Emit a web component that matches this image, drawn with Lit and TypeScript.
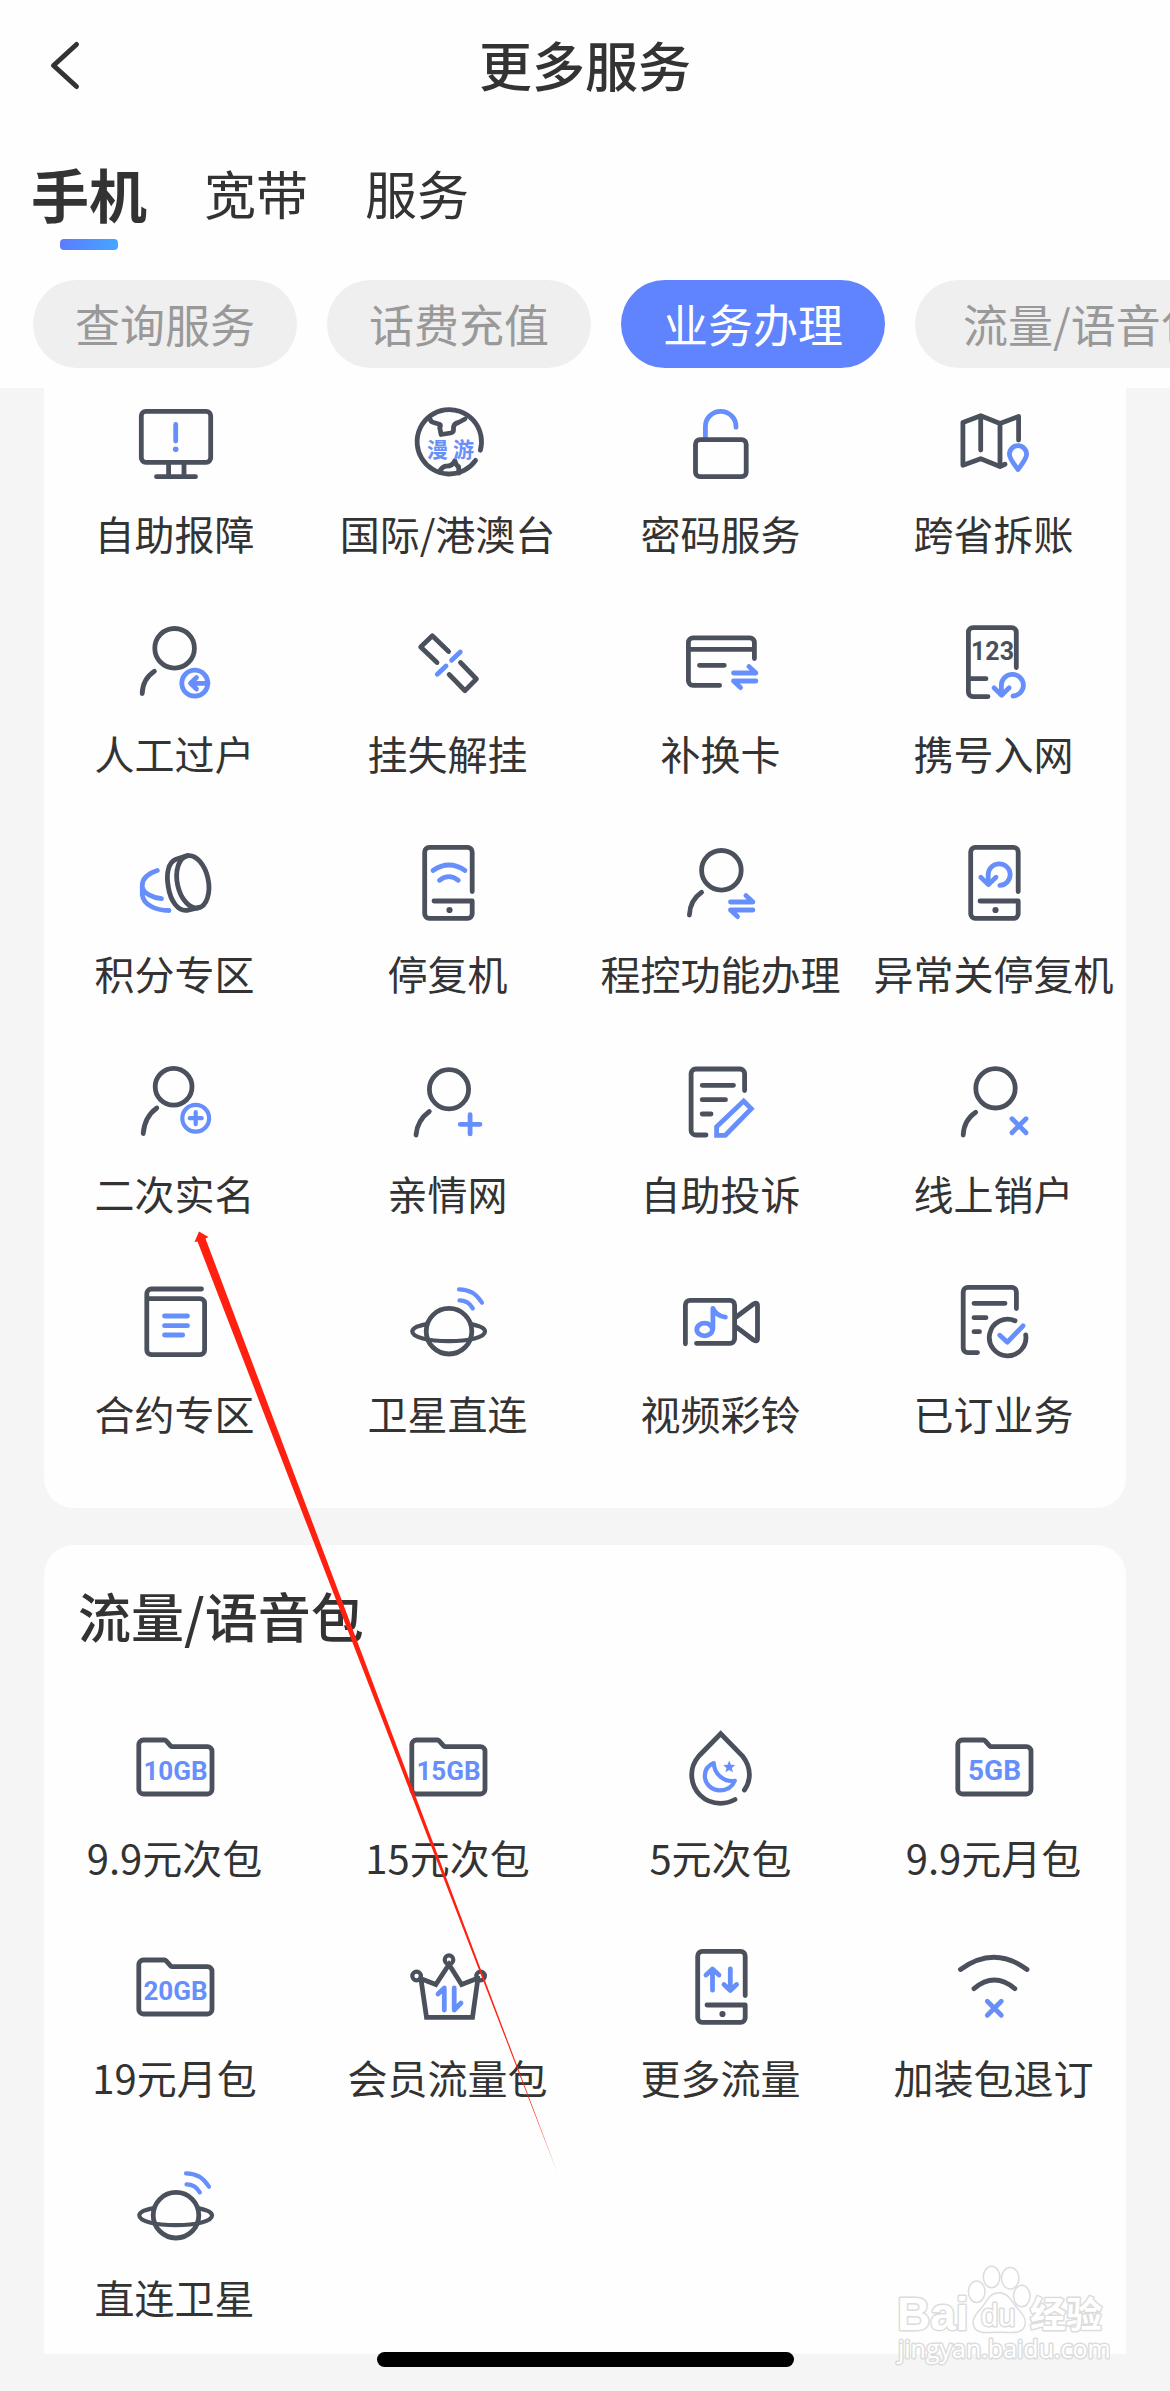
import { LitElement, html, css, svg, nothing, type SVGTemplateResult } from "lit";
import { customElement, property, state } from "lit/decorators.js";
import { classMap } from "lit/directives/class-map.js";

interface Service {
  label: string;
  icon: string;
}

/* ---- icon parts, all on a 90 x 90 grid; class k is ink, class b is blue ---- */

const person = (cx: number, cy: number, r: number, shoulder: string) => svg`
  <circle class="k" cx=${cx} cy=${cy} r=${r} />
  <path class="k" d=${shoulder} />`;

const phone = svg`
  <path class="k" d="M69.2 52.5V13a4.6 4.6 0 0 0-4.6-4.6H26.3a4.6 4.6 0 0 0-4.6 4.6v61.7a4.6 4.6 0 0 0 4.6 4.6h38.3a4.6 4.6 0 0 0 4.6-4.6V62H31" />
  <circle class="kf" cx="46.5" cy="71" r="3.1" />`;

const folder = (text: string, size: number) => svg`
  <path class="k" d="M13.4 17H34.4q1 0 1.8.9l4.4 5q.7.8 1.8.8H77.4a4.6 4.6 0 0 1 4.6 4.6V66.4a4.6 4.6 0 0 1-4.6 4.6H13.4a4.6 4.6 0 0 1-4.6-4.6V21.6a4.6 4.6 0 0 1 4.6-4.6z" />
  <text class="gb" x="45.5" y="57" font-size=${size}>${text}</text>`;

const undo = svg`
  <path class="b" d="M52.4 75.5V67A11 10.8 0 1 1 64 77" />
  <path class="b" d="M45 68.8l7.6 7.4 7.6-7.4" />`;

const swap = svg`
  <path class="b" d="M0 0H22.4L15.4-6.4M22.4 8H0L7 14.6" />`;

const cross = svg`<path class="b" d="M-7-7L7 7M7-7L-7 7" />`;

const planet = svg`
  <circle class="k" cx="46" cy="52.2" r="22.8" />
  <path class="k thin" d="M22.5 45.4C14 47 9.3 49.6 9.3 52.6c0 5.6 16 9.6 36.5 9.6s36.2-4 36.2-9.6c0-3-4.7-5.6-13-7.2" />
  <path class="b thin" d="M56 10.4c10 0 18 5 23 13.4M56.5 21.4c6 0 10.5 3 13.3 8" />`;

const icons: Record<string, SVGTemplateResult> = {
  monitor: svg`
    <rect class="k" x="11.3" y="12.3" width="69.4" height="51" rx="4.5" />
    <path class="k" d="M38.6 64v13M54 64v13M26.5 77.7h39" />
    <path class="b" d="M45.7 25.5v16.5" /><circle class="bf" cx="45.7" cy="50.3" r="2.8" />`,
  globe: svg`
    <path class="k" d="M77.4 51.2A32.2 32.2 0 1 0 72.6 61.4" />
    <path class="k" d="M27 19.5q.5 3.500 3.500 4l6 1.700q1.600 1.200.2 3.300l1.400 7 9.500-1.500q3-.7 2.900-3.300V28q1-4 5-4.500l6.500-3.500M36.300 73q2.500-5 6.500-5.800 6.500.3 9-5.500 1.500 5 3.700 5.800l.5 6.500" />
    <text class="cn" x="24" y="58">漫</text><text class="cn" x="50" y="58">游</text>`,
  lock: svg`
    <path class="b" d="M29.4 40V27.6a15.3 15.3 0 0 1 30.6 0v.7" />
    <rect class="k" x="19.5" y="40.7" width="50.7" height="37" rx="4.5" />`,
  map: svg`
    <path class="k" d="M69.6 41V17.5L51 24.5 31.7 16.7 13.9 23.5V66.3L31.7 59.7 51 67.5 56 65.2M31.7 17V51M51 25V67" />
    <path class="b" d="M69 70.5C64.8 65 60.4 59.5 60.4 55.3a8.6 8.6 0 0 1 17.2 0C77.6 59.5 73.2 65 69 70.5z" />`,
  transfer: svg`
    ${person(44.6, 29.3, 19.8, "M24.4 52.3C16.5 57.5 12.5 65.5 12.2 74.5")}
    <circle class="b" cx="64.8" cy="64.2" r="13" />
    <path class="b" d="M78 64.3H61M66.5 58.5l-6 5.8 6 5.8" />`,
  unlink: svg`
    <path class="k" d="M45.6 32.5L29.3 16.7 17.7 28 34 43.5M57.5 43.5L73.4 60 62 71.7 46.2 55.5" />
    <path class="b" d="M57.3 33l-8.7 8.3M43 47l-8.7 8.3" />`,
  card: svg`
    <path class="k" d="M43.6 66.4H17a4.6 4.6 0 0 1-4.6-4.6V23.4a4.6 4.6 0 0 1 4.6-4.6H73.8a4.6 4.6 0 0 1 4.6 4.6V39.5M12.4 30.3h66M23.5 46.3H48.3" />
    <g transform="translate(57.5 54)">${swap}</g>`,
  number: svg`
    <path class="k" d="M67.3 48.5V13.2a4.6 4.6 0 0 0-4.6-4.6H24a4.6 4.6 0 0 0-4.6 4.6V73a4.6 4.6 0 0 0 4.6 4.6H39M19.4 59.7H37" />
    <text class="num" x="43.5" y="41">123</text>${undo}`,
  coins: svg`
    <ellipse class="k" cx="62.8" cy="42.8" rx="15.5" ry="26.6" transform="rotate(-12 62.8 42.8)" />
    <path class="k" d="M57.5 16.5L46 20.3C38 23.5 36 35 38.3 48 40.5 62 48 72.5 57 71.3L69.5 68.3" />
    <path class="b" d="M27.3 31.5C18 34.5 12.3 40 12.3 46.5V56C13.5 65.5 25 71.3 39 71.5M12.5 48.5C14 54.5 22 58.5 31.5 59.7" />`,
  phonewifi: svg`${phone}
    <path class="b" d="M30 31.5Q46 20.5 62 31.5M36.5 41.3Q46 34 55.3 41.3" />`,
  program: svg`
    ${person(45.4, 31.3, 19.8, "M25.6 53.3C18 58.5 13.8 67 13.4 76")}
    <g transform="translate(54.5 63)">${swap}</g>`,
  phoneback: svg`${phone}<g transform="translate(-13.2 -30.6)">${undo}</g>`,
  realname: svg`
    ${person(43.6, 27.8, 18.4, "M26.8 49C18.5 55 14 64.5 13.2 74.5")}
    <circle class="b thin" cx="65.7" cy="59.2" r="13.4" />
    <path class="b thin" d="M59.7 59.2h12M65.7 53.2v12" />`,
  family: svg`
    ${person(46, 30.3, 19.6, "M26.3 52.5C18 58.5 13.8 66.5 13 76")}
    <path class="b" d="M57.2 65.3h19.8M67.1 55.7v19.2" />`,
  complain: svg`
    <path class="k" d="M68.6 31.5V14.6a4.6 4.6 0 0 0-4.6-4.6H19.7a4.6 4.6 0 0 0-4.6 4.6V71.4a4.6 4.6 0 0 0 4.6 4.6H30M26.2 26.3H57.5M26.2 40.7H49.5M26.2 55H35" />
    <path class="b miter" d="M67.6 42L75.3 49.8 49.3 76.3H40.6V67.8z" />`,
  close: svg`
    ${person(46.5, 29.3, 19.7, "M26.7 53.3C19 58.5 14.6 67 14.2 76")}
    <g transform="translate(70 66.7)">${cross}</g>`,
  contract: svg`
    <path class="k" d="M71.5 10H21.4a4.6 4.6 0 0 0-4.6 4.6V71a4.6 4.6 0 0 0 4.6 4.6H70a4.6 4.6 0 0 0 4.6-4.6V24.3A4.6 4.6 0 0 0 70 19.7H17" />
    <path class="b" d="M34.5 37H57.5M34.5 46.7H57.5M34.5 56H52.7" />`,
  planet,
  video: svg`
    <path class="k" d="M9.4 64.8V26a4.6 4.6 0 0 1 4.6-4.6H54a4.6 4.6 0 0 1 4.6 4.6V59.7a4.6 4.6 0 0 1-4.6 4.6H20.5M59.5 38.5L77.5 25q4-2.5 4 1.500V59.500q0 4-4 1.500L59.500 47.300" />
    <ellipse class="b" cx="28.6" cy="50.5" rx="7.8" ry="6.3" />
    <path class="b" d="M36.9 50V29.3q3.5 8 12.5 8.8" />`,
  ordered: svg`
    <path class="k" d="M67.4 29.5V12.9a4.6 4.6 0 0 0-4.6-4.6H18.8a4.6 4.6 0 0 0-4.6 4.6V69a4.6 4.6 0 0 0 4.6 4.6H28.5M25 24.3H56M25 38.7H37M25 52.7H30.5" />
    <path class="k" d="M66 41.8A18.3 18.3 0 1 0 76.7 55.8" />
    <path class="b" d="M50.8 56.2l7.6 7L74 46.8" />`,
  gb10: folder("10GB", 26),
  gb15: folder("15GB", 26),
  gb5: folder("5GB", 28),
  gb20: folder("20GB", 26),
  drop: svg`
    <path class="k miter" d="M68.4 67C72 62 73.4 57 73.4 51.5 73.4 43 70 37.5 66.5 33L44.7 10.8 22.9 33C19 37.5 15.7 43 15.7 51.5 15.7 68 28.5 80.3 44.5 80.3 50 80.3 54.5 79 59 76.5" />
    <path class="b thin" d="M37.8 40C31.5 42.5 28.8 47.5 28.8 53a15 14.6 0 0 0 15 14.3C51 67.3 56.5 63.5 58.8 57.8 48 59.5 38 51 37.8 40z" />
    <path class="bf" d="M53.2 37.5l1.7 4.2 4.3.3-3.3 2.900 1 4.400-3.700-2.400-3.800 2.400 1.100-4.400-3.400-2.900 4.400-.3z" />`,
  crown: svg`
    <circle class="k thin" cx="46" cy="16.7" r="4.3" /><circle class="k thin" cx="13.6" cy="33" r="4.3" /><circle class="k thin" cx="77.6" cy="33" r="4.3" />
    <path class="k miter" d="M17.8 35L23.5 74.3H69.5L75 35M17.5 35.5L32.8 41.5 46 21.5 58.6 41.5 74 35.5" />
    <path class="b" d="M41.3 67V45L35 51M51.2 45V67L58 60" />`,
  traffic: svg`${phone}
    <path class="b" d="M36.5 47.2V27M30 32l6.5-6 6.5 6M54.3 26V46.5M48 41.5l6.3 6 6.3-6" />`,
  wifioff: svg`
    <path class="k" d="M11.5 26.5Q45 2 78 26.5M25 45.7Q45.3 28.5 65.8 45.7" />
    <g transform="translate(45.3 65.3)">${cross}</g>`,
};

const business: Service[] = [
  { label: "自助报障", icon: "monitor" },
  { label: "国际/港澳台", icon: "globe" },
  { label: "密码服务", icon: "lock" },
  { label: "跨省拆账", icon: "map" },
  { label: "人工过户", icon: "transfer" },
  { label: "挂失解挂", icon: "unlink" },
  { label: "补换卡", icon: "card" },
  { label: "携号入网", icon: "number" },
  { label: "积分专区", icon: "coins" },
  { label: "停复机", icon: "phonewifi" },
  { label: "程控功能办理", icon: "program" },
  { label: "异常关停复机", icon: "phoneback" },
  { label: "二次实名", icon: "realname" },
  { label: "亲情网", icon: "family" },
  { label: "自助投诉", icon: "complain" },
  { label: "线上销户", icon: "close" },
  { label: "合约专区", icon: "contract" },
  { label: "卫星直连", icon: "planet" },
  { label: "视频彩铃", icon: "video" },
  { label: "已订业务", icon: "ordered" },
];

const packs: Service[] = [
  { label: "9.9元次包", icon: "gb10" },
  { label: "15元次包", icon: "gb15" },
  { label: "5元次包", icon: "drop" },
  { label: "9.9元月包", icon: "gb5" },
  { label: "19元月包", icon: "gb20" },
  { label: "会员流量包", icon: "crown" },
  { label: "更多流量", icon: "traffic" },
  { label: "加装包退订", icon: "wifioff" },
  { label: "直连卫星", icon: "planet" },
];

@customElement("service-grid")
class ServiceGrid extends LitElement {
  @property() heading = "";
  @property({ attribute: false }) items: Service[] = [];

  static styles = css`
    :host { display: block; background: #fefefe; }
    .heading {
      margin: 0; padding: 34px 34px 72px;
      font-size: 53px; line-height: 72px; font-weight: 500; color: #333;
    }
    .grid {
      display: grid; grid-template-columns: repeat(4, minmax(0, 1fr));
      row-gap: 58px; margin: 0 -4px 0 -6px; padding: 0; list-style: none;
    }
    .cell {
      display: flex; flex-direction: column; align-items: center; gap: 16px;
      color: #333; text-decoration: none; font-size: 40px; line-height: 56px; white-space: nowrap;
    }
    .icon { display: block; width: 90px; height: 90px; }
    .k, .b { fill: none; stroke-width: 4.8; stroke-linecap: round; stroke-linejoin: round; }
    .k { stroke: #4a505c; }
    .b { stroke: #678ffb; }
    .thin { stroke-width: 4.2; }
    .miter { stroke-linejoin: miter; }
    .kf { fill: #4a505c; }
    .bf { fill: #678ffb; }
    .cn { fill: #678ffb; font-size: 21px; font-weight: 700; }
    .gb, .num { text-anchor: middle; font-family: "Roboto", "Liberation Sans", sans-serif; font-weight: 700; }
    .gb { fill: #678ffb; }
    .num { fill: #4a505c; font-size: 25px; }
  `;

  render() {
    return html`
      ${this.heading ? html`<h2 class="heading">${this.heading}</h2>` : nothing}
      <ul class="grid">
        ${this.items.map((s) => html`
          <li>
            <a class="cell" href="#">
              <svg class="icon" viewBox="0 0 90 90" aria-hidden="true">${icons[s.icon]}</svg>
              <span>${s.label}</span>
            </a>
          </li>`)}
      </ul>`;
  }
}

@customElement("app-root")
class AppRoot extends LitElement {
  @state() private tab = "手机";
  @state() private chip = "业务办理";

  static styles = css`
    :host {
      display: block; position: relative; overflow: hidden; background: #f5f5f5; color: #333;
      font-family: "Noto Sans CJK SC", "Noto Sans", sans-serif;
    }
    button { font: inherit; color: inherit; border: 0; padding: 0; background: none; cursor: pointer; }
    .top { background: #fefefe; padding-bottom: 20px; }
    .bar { display: grid; grid-template-columns: 1fr auto 1fr; align-items: center; height: 128px; }
    .back { justify-self: start; margin-left: 44px; width: 44px; height: 60px; }
    .back svg { display: block; width: 44px; height: 60px; }
    .title { margin: 0; font-size: 53px; line-height: 72px; font-weight: 500; }
    .tabs { display: flex; gap: 57px; padding: 23px 31px 0; }
    .tab { display: flex; flex-direction: column; align-items: center; font-size: 52px; line-height: 84px; }
    .tab.on { font-size: 58px; font-weight: 700; }
    .tab.on::after {
      content: ""; width: 58px; height: 11px; margin-top: 4px; border-radius: 4px;
      background: linear-gradient(90deg, #5b7cff, #45a6ff);
    }
    .chips { display: flex; gap: 30px; padding: 30px 0 0 33px; overflow: hidden; }
    .chip {
      flex: none; height: 88px; padding: 0 42px; border-radius: 44px;
      background: #efefef; color: #999; font-size: 45px; line-height: 86px; white-space: nowrap;
    }
    .chip.long { padding: 0 48px; }
    .chip.on { background: #6083fe; color: #fff; }
    .main { display: flex; flex-direction: column; gap: 37px; padding: 0 44px; }
    .first { padding: 11px 0 67px; border-radius: 0 0 30px 30px; }
    .second { padding-bottom: 29px; border-radius: 30px 30px 0 0; }
    .safe { height: 37px; }
    .home {
      position: absolute; left: 50%; bottom: 24px; width: 417px; height: 15px;
      margin-left: -208px; border-radius: 8px; background: #000;
    }
    .pointer { position: absolute; left: 190px; top: 1230px; width: 370px; height: 945px; pointer-events: none; }
    .mark { position: absolute; right: 60px; bottom: 21px; width: 220px; height: 110px; pointer-events: none; }
    .mark text, .mark .w { fill: #fff; stroke: #dcdcdc; stroke-width: 3; paint-order: stroke; stroke-linejoin: round; }
    .mark .bai { font: 700 46px "Liberation Sans", sans-serif; }
    .mark .du { font: 400 31px "Liberation Sans", sans-serif; }
    .mark .jy { font: 700 36px "Noto Sans CJK SC", sans-serif; }
    .mark .url { font: 400 25px "Open Sans", sans-serif; }
  `;

  render() {
    return html`
      <header class="top">
        <div class="bar">
          <button class="back" aria-label="返回">
            <svg viewBox="0 0 44 60" aria-hidden="true"><path d="M32.5 10.500L9.500 31.500 32.500 52.500" fill="none" stroke="#333" stroke-width="5" stroke-linecap="round" stroke-linejoin="round" /></svg>
          </button>
          <h1 class="title">更多服务</h1>
        </div>
        <nav class="tabs">
          ${["手机", "宽带", "服务"].map((t) => html`
            <button class=${classMap({ tab: true, on: t === this.tab })} @click=${() => (this.tab = t)}>${t}</button>`)}
        </nav>
        <div class="chips">
          ${["查询服务", "话费充值", "业务办理", "流量/语音包"].map((c) => html`
            <button class=${classMap({ chip: true, long: c.length > 4, on: c === this.chip })} @click=${() => (this.chip = c)}>${c}</button>`)}
        </div>
      </header>
      <main class="main">
        <service-grid class="first" .items=${business}></service-grid>
        <service-grid class="second" heading="流量/语音包" .items=${packs}></service-grid>
      </main>
      <div class="safe"></div>
      <div class="home"></div>
      <svg class="mark" viewBox="0 0 220 110" aria-hidden="true">
        <text class="bai" x="7" y="70">Bai</text>
        <ellipse class="w" cx="101.6" cy="17" rx="7.5" ry="10" /><ellipse class="w" cx="120.2" cy="18.3" rx="8" ry="10" />
        <ellipse class="w" cx="86.7" cy="31.7" rx="7.5" ry="10" /><ellipse class="w" cx="131.8" cy="36" rx="7.5" ry="10" />
        <path class="w" d="M109 33.5C118 33.5 121 42 127 49 133 55 136 60 134 66 131 73.5 122 71.5 109 71.5S88 73.5 84.5 66C82.5 60 86 55 91.5 49 97.5 42 100 33.5 109 33.5z" />
        <text class="du" x="91" y="66">du</text>
        <text class="jy" x="140" y="68">经验</text>
        <text class="url" x="8" y="98">jingyan.baidu.com</text>
      </svg>
      <svg class="pointer" viewBox="0 0 370 945" aria-hidden="true">
        <path d="M9 1.500L18.500 7 15.500 8.500 367.500 943 7.500 11.500 4.500 12z" fill="#ff2010" />
      </svg>`;
  }
}
